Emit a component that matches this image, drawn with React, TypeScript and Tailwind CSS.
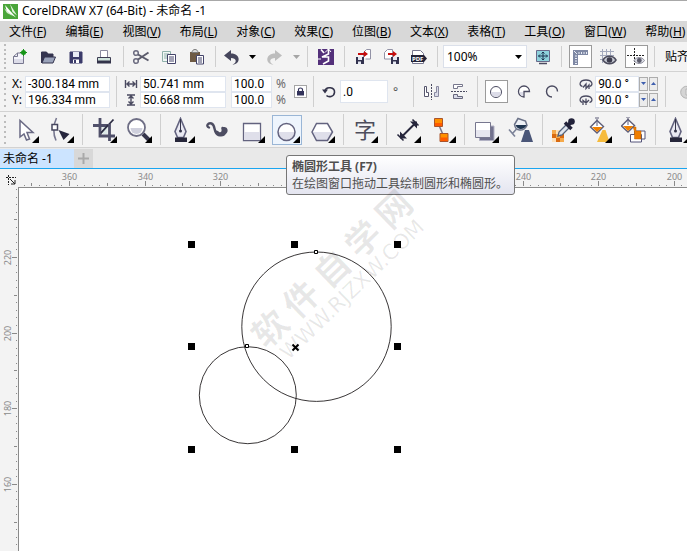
import { ReactNode } from 'react';
import clsx from 'clsx';

const menus = [
    ['文件', 'F'],
    ['编辑', 'E'],
    ['视图', 'V'],
    ['布局', 'L'],
    ['对象', 'C'],
    ['效果', 'C'],
    ['位图', 'B'],
    ['文本', 'X'],
    ['表格', 'T'],
    ['工具', 'O'],
    ['窗口', 'W'],
    ['帮助', 'H'],
];

const INK = '#4a4a60';

function Grip() {
    return (
        <div className="flex h-full w-2 shrink-0 flex-col justify-evenly pl-1">
            {[0, 1, 2, 3, 4, 5].map((i) => (
                <span key={i} className="size-[2px] bg-[#bcbcbc]" />
            ))}
        </div>
    );
}

function Divider({ className }: { className?: string }) {
    return (
        <div className={clsx('my-1 w-px shrink-0 self-stretch bg-[#cfcfcf]', className)} />
    );
}

type IconButtonProps = {
    label: string;
    className?: string;
    boxed?: boolean;
    children: ReactNode;
};

function IconButton({ label, className, boxed, children }: IconButtonProps) {
    return (
        <button
            aria-label={label}
            className={clsx('flex h-7 shrink-0 items-center justify-center', className ?? 'w-7')}
        >
            {boxed ? (
                <span className="flex size-[23px] items-center justify-center border border-[#9b9b9b] bg-white">
                    {children}
                </span>
            ) : (
                children
            )}
        </button>
    );
}

function Icon({ children }: { children: ReactNode }) {
    return (
        <svg viewBox="0 0 18 18" className="size-[18px] shrink-0" fill="none" stroke={INK}>
            {children}
        </svg>
    );
}

type ToolProps = {
    label: string;
    active?: boolean;
    flyout?: boolean;
    children: ReactNode;
};

function Tool({ label, active, flyout = true, children }: ToolProps) {
    return (
        <button
            aria-label={label}
            className="flex h-[34px] w-[35px] shrink-0 items-center justify-center"
        >
            <span
                className={clsx(
                    'flex h-[30px] w-[30px] items-center justify-center border',
                    active ? 'border-[#9ab6d6] bg-[#eef5fd]' : 'border-transparent',
                )}
            >
                <svg viewBox="0 0 26 26" className="size-[26px]" fill="none" stroke={INK}>
                    {children}
                    {flyout && <path d="M26 19v7h-7z" fill="#000" stroke="none" />}
                </svg>
            </span>
        </button>
    );
}

function Caret({ dim }: { dim?: boolean }) {
    return (
        <svg viewBox="0 0 7 4" className="h-1 w-[7px]">
            <path d="M0 0h7L3.5 4z" fill={dim ? '#a5a5a5' : '#000'} />
        </svg>
    );
}

function PenIcon() {
    return (
        <>
            <path d="M11.5 1.5 6 14.5l2.5 6h6l2.500-6z" fill="#e9e9f2" stroke="#63637f" strokeWidth="1.6" />
            <path d="M11.500 2v11" stroke="#35354a" />
            <circle cx="11.500" cy="14" r="1.5" fill="#35354a" stroke="none" />
            <path d="M6 20.500h12V25H6z" fill="#26263a" stroke="none" />
        </>
    );
}

function Bucket() {
    return (
        <>
            <path d="M4.500 10 11 3.500l6.500 6L11 16z" fill="#fff" stroke="#5d5d78" strokeWidth="1.4" />
            <path d="M6 10h10.500L11 15z" fill="#f08000" stroke="none" />
            <path d="M11 9V2M9 1h4" stroke="#5d5d78" />
        </>
    );
}

function TitleBar() {
    return (
        <header className="flex h-[21px] shrink-0 items-center gap-1 border-t border-[#a8a8a8] bg-white pl-[3px]">
            <svg viewBox="0 0 15 15" className="size-[15px] shrink-0">
                <path d="M0 0h15v15H0z" fill="#4aa53a" />
                <path d="M2 1 13 13.500 4 8z" fill="#fff" />
                <path d="M7 0 14 11.500 9.500 8z" fill="#e9f7e4" />
                <path d="m1 4 3 5 6 3z" fill="#d5efcd" />
            </svg>
            <h1 className="whitespace-nowrap text-[12px]">CorelDRAW X7 (64-Bit) - 未命名 -1</h1>
        </header>
    );
}

function MenuBar() {
    return (
        <nav className="flex h-[21px] shrink-0 items-center gap-[19px] overflow-hidden bg-[#d8d8d8] pl-[9px]">
            {menus.map(([name, key]) => (
                <button key={name} className="shrink-0 whitespace-nowrap text-[12px]">
                    {name}(<u>{key}</u>)
                </button>
            ))}
        </nav>
    );
}

function StandardBar() {
    return (
        <div className="flex h-[30px] shrink-0 items-center overflow-hidden border-b border-[#d2d2d2]">
            <Grip />
            <IconButton label="新建" className="-ml-[2px] w-7">
                <Icon>
                    <path d="M2.500 8.500 6.500 5h6v10.500h-10z" fill="#f4f4fa" stroke="#77778f" />
                    <path d="M3 11h9v4H3z" fill="#dcdce8" stroke="none" />
                    <path d="M2.500 8.500h4V5" stroke="#77778f" />
                    <circle cx="12.500" cy="4.500" r="2.500" fill="#159416" stroke="none" />
                    <path d="M12.500 1v7M9 4.500h7" stroke="#159416" />
                </Icon>
            </IconButton>
            <IconButton label="打开">
                <Icon>
                    <path d="M2.500 15V4h5l1.500 2h5v3" fill="#34344f" stroke="#34344f" />
                    <path d="m3 15 2.500-6h11L14 15z" fill="#9aa3ba" stroke="#34344f" />
                </Icon>
            </IconButton>
            <IconButton label="保存">
                <Icon>
                    <path d="M3 4h12v11H3z" fill="#3b3b6a" stroke="#3b3b6a" />
                    <path d="M6 4h6v5H6z" fill="#e9ecf6" stroke="none" />
                    <path d="M6 11.500h6V15H6z" fill="#fff" stroke="none" />
                    <path d="M7 12h2v3H7z" fill="#3b3b6a" stroke="none" />
                </Icon>
            </IconButton>
            <IconButton label="打印">
                <Icon>
                    <path d="M5.500 9V2.500h7V9" fill="#fff" stroke="#8c8ca0" />
                    <path d="M2.500 9.500h13V13h-13z" fill="#cfe3dc" stroke="#3d3d52" />
                    <path d="M2 13h14v2.500H2z" fill="#33334a" stroke="none" />
                </Icon>
            </IconButton>
            <Divider className="mr-[3px] ml-[5px]" />
            <IconButton label="剪切">
                <Icon>
                    <circle cx="4" cy="5" r="2.300" stroke="#6c6c80" strokeWidth="1.5" />
                    <circle cx="4" cy="13" r="2.300" stroke="#6c6c80" strokeWidth="1.500" />
                    <path d="m6 6.500 10.500 6M6 11.500 16.500 4.500" stroke="#5b5b6b" strokeWidth="2" />
                </Icon>
            </IconButton>
            <IconButton label="复制">
                <Icon>
                    <path d="M2.500 3.500h8v10h-8z" fill="#f0f6f4" stroke="#8fb0aa" />
                    <path d="M4 6h5M4 8h3M4 10h3" stroke="#8fb0aa" />
                    <path d="M7.500 6.500h8v9h-8z" fill="#fff" stroke="#44446a" />
                    <path d="M9 9h5M9 11h5M9 13h5" stroke="#44446a" />
                </Icon>
            </IconButton>
            <IconButton label="粘贴">
                <Icon>
                    <path d="M2 4h10v10H2z" fill="#6e5a44" stroke="none" />
                    <path d="M4 4.500c0-4 6-4 6 0z" fill="#ddd" stroke="#7d7d7d" />
                    <path d="M8.500 7.500h7v8.500h-7z" fill="#fff" stroke="#44446a" />
                    <path d="M10 10h4M10 12h4M10 14h4" stroke="#44446a" />
                </Icon>
            </IconButton>
            <Divider className="mx-1" />
            <IconButton label="撤消" className="w-6">
                <Icon>
                    <path d="M1 7.500 8 2v3.500c10 0 10 11 1.500 11 5-2 4-6.500-1.500-6.500V13z" fill="#46465c" stroke="none" />
                </Icon>
            </IconButton>
            <IconButton label="撤消列表" className="w-4">
                <Caret />
            </IconButton>
            <IconButton label="重做">
                <Icon>
                    <path d="M17 7.500 10 2v3.500c-10 0-10 11-1.500 11-5-2-4-6.500 1.500-6.500V13z" fill="#bdbdbd" stroke="none" />
                </Icon>
            </IconButton>
            <IconButton label="重做列表" className="w-4">
                <Caret dim />
            </IconButton>
            <Divider className="mr-1 ml-[3px]" />
            <IconButton label="搜索内容">
                <Icon>
                    <path d="M1 1h16v16H1z" fill="#53307a" stroke="none" />
                    <path d="M4 1.500 7 5M11.500 1v5L5 9h6.500v4L6 16" stroke="#fff" strokeWidth="1.600" />
                    <path d="M8 4.500 11.500 1 14 4M1 11h3" stroke="#fff" />
                </Icon>
            </IconButton>
            <Divider className="mx-1" />
            <IconButton label="导入">
                <Icon>
                    <path d="M9.500 9V4.500l3-3h4V11h-5" fill="#fff" stroke="#9292a6" />
                    <path d="M4 5h6V3l4 3-4 3V7H4z" fill="#c40d0d" stroke="none" />
                    <path d="M2 9h8v7H2z" fill="#32324f" stroke="none" />
                    <path d="M4 9h4v3H4zM4 13.500h3V16H4z" fill="#e6e9f3" stroke="none" />
                </Icon>
            </IconButton>
            <IconButton label="导出">
                <Icon>
                    <path d="M2.500 11V4.500l3-3h5V11z" fill="#fff" stroke="#9292a6" />
                    <path d="M6 5h5V3l4 3-4 3V7H6z" fill="#c40d0d" stroke="none" />
                    <path d="M9 9h8v7H9z" fill="#32324f" stroke="none" />
                    <path d="M11 9h4v3h-4zM11 13.500h3V16h-3z" fill="#e6e9f3" stroke="none" />
                </Icon>
            </IconButton>
            <IconButton label="发布为 PDF">
                <Icon>
                    <path d="M2.500 2.500h8l3 3v10h-11z" fill="#fff" stroke="#77778f" />
                    <path d="M1 7h13l3 3.500-3 3.500H1z" fill="#232338" stroke="none" />
                    <text x="2" y="13" fontSize="6" fontWeight="700" fill="#fff" stroke="none">
                        PDF
                    </text>
                </Icon>
            </IconButton>
            <Divider className="mr-[5px] ml-1" />
            <div className="relative flex h-[23px] w-[84px] shrink-0 items-center border border-[#dbe0ea] bg-white">
                <select
                    aria-label="缩放级别"
                    className="h-full w-full appearance-none pl-[3px] text-[12px] outline-none"
                >
                    <option>100%</option>
                </select>
                <span className="pointer-events-none absolute right-1 flex">
                    <Caret />
                </span>
            </div>
            <IconButton label="全屏预览" className="ml-[2px] w-7">
                <Icon>
                    <path d="M2.500 2.500h13v11h-13z" fill="#8ed2dc" stroke="#69698a" />
                    <path d="M9 4v8M4.500 8h9M7.500 5.500 9 4l1.500 1.500M7.500 10.500 9 12l1.500-1.500M6 6.500 4.500 8 6 9.500M12 6.500 13.500 8 12 9.500" stroke="#1d3350" />
                    <path d="M5 15.500h8" strokeWidth="1.500" />
                </Icon>
            </IconButton>
            <Divider className="mx-1" />
            <IconButton label="显示标尺" boxed>
                <Icon>
                    <path d="M2 2h15v5H7v10H2z" fill="#7e88a4" stroke="none" />
                    <path d="M8 4v2M10.500 4v2M13 4v2M15.500 4v2M4 8h2M4 10.500h2M4 13h2M4 15.500h2M3 3l3 3" stroke="#e9edf7" />
                </Icon>
            </IconButton>
            <IconButton label="显示网格">
                <Icon>
                    <path d="M1 3.500h14M1 7.500h14M1 11.500h5M3.500 1v14M7.500 1v9M11.500 1v7" stroke="#a3a9bd" />
                    <path d="M4 12c3-5 10-5 13 0-3 5-10 5-13 0z" fill="#c9ccd6" stroke="#4c4c5d" strokeWidth="1.500" />
                    <circle cx="10.500" cy="12" r="2.800" fill="#3b3b4c" stroke="none" />
                </Icon>
            </IconButton>
            <IconButton label="显示辅助线" boxed>
                <Icon>
                    <path d="M0 7.500h18M7.500 0v17" stroke="#222" strokeDasharray="2 1" />
                    <path d="M7 12.500c2.500-4 8-4 10.500 0-2.500 4-8 4-10.500 0z" fill="#dcdee6" stroke="#8b8b99" />
                    <circle cx="12.300" cy="12.500" r="2.400" fill="#5c5c6c" stroke="none" />
                </Icon>
            </IconButton>
            <Divider className="mr-[10px] ml-1" />
            <button className="shrink-0 whitespace-nowrap text-[12px]">贴齐</button>
        </div>
    );
}

type FieldProps = {
    label: string;
    value: string;
    className: string;
    children?: ReactNode;
};

function Field({ label, value, className, children }: FieldProps) {
    return (
        <label className="flex h-4 items-center">
            {children}
            <input
                aria-label={label}
                defaultValue={value}
                className={clsx(
                    'h-4 border border-[#dfe5ef] bg-white pl-[2px] font-[Roboto] text-[12px] leading-none outline-none',
                    className,
                )}
            />
        </label>
    );
}

function Angle({ label, flip }: { label: string; flip?: boolean }) {
    return (
        <div className="flex items-center">
            <Field label={label} value="90.0 °" className="w-11">
                <svg viewBox="0 0 14 12" className="mr-[2px] h-3 w-[14px]" fill="none" stroke={INK}>
                    <path d="M3.500 8.500C-1 7 1 2 7 2s8 5 3.500 6.500" strokeWidth="1.300" />
                    {flip ? (
                        <path d="M7 4.500V11M4 11V6.500l3 2.500 3-3" strokeWidth="1.300" />
                    ) : (
                        <path d="M4 9.500 7 6v4.500L10 7v4" strokeWidth="1.300" />
                    )}
                </svg>
            </Field>
            {['减少', '增加'].map((name, i) => (
                <button
                    key={name}
                    aria-label={label + name}
                    className="mr-px flex h-[14px] w-[9px] items-center justify-center border border-[#adadad] bg-[#ececec]"
                >
                    <svg viewBox="0 0 5 3" className="h-[3px] w-[5px]">
                        <path d={i ? 'M0 3h5L2.500 0z' : 'M0 0h5L2.500 3z'} fill="#3f5fae" />
                    </svg>
                </button>
            ))}
        </div>
    );
}

function PropertyBar() {
    return (
        <div className="flex h-10 shrink-0 items-center overflow-hidden border-b border-[#d2d2d2]">
            <Grip />
            <div className="shrink-0 pl-1">
                <Field label="X" value="-300.184 mm" className="w-[85px]">
                    <span className="w-[13px] text-[12px]">X:</span>
                </Field>
                <Field label="Y" value="196.334 mm" className="w-[85px]">
                    <span className="w-[13px] text-[12px]">Y:</span>
                </Field>
            </div>
            <Divider className="mr-[7px] ml-[6px]" />
            <div className="shrink-0">
                <Field label="宽度" value="50.741 mm" className="w-[86px]">
                    <svg viewBox="0 0 14 12" className="mr-[2px] h-3 w-[14px]" fill="none" stroke={INK}>
                        <path d="M1.500 2v8M12.500 2v8M3 6h8M5.500 3.500 3 6l2.500 2.500M8.500 3.500 11 6 8.500 8.500" strokeWidth="1.400" />
                    </svg>
                </Field>
                <Field label="高度" value="50.668 mm" className="w-[86px]">
                    <svg viewBox="0 0 14 12" className="mr-[2px] h-3 w-[14px]" fill="none" stroke={INK}>
                        <path d="M3 1h8M3 11h8M7 2v8M4.500 4.500 7 2l2.500 2.500M4.500 7.500 7 10l2.500-2.500" strokeWidth="1.400" />
                    </svg>
                </Field>
            </div>
            <div className="ml-[5px] shrink-0">
                <Field label="水平缩放" value="100.0" className="w-[41px]" />
                <Field label="垂直缩放" value="100.0" className="w-[41px]" />
            </div>
            <div className="ml-1 shrink-0 text-[12px] leading-4 text-[#6b6b6b]">
                <p>%</p>
                <p>%</p>
            </div>
            <button
                aria-label="锁定比率"
                className="ml-2 flex size-[13px] shrink-0 items-center justify-center border border-[#a5a5a5] bg-white"
            >
                <svg viewBox="0 0 9 9" className="size-[9px]">
                    <path d="M2.500 4V2.500c0-2 4-2 4 0V4" fill="none" stroke="#32325a" strokeWidth="1.200" />
                    <path d="M1 4h7v4.500H1z" fill="#32325a" />
                </svg>
            </button>
            <Divider className="mr-[6px] ml-[6px]" />
            <svg viewBox="0 0 18 18" className="size-[18px] shrink-0" fill="none" stroke="#33334a">
                <path d="M5 8c1-5 10-4 9.500 1.500C14 14 8.500 14.500 6.500 12.500" strokeWidth="1.600" />
                <path d="M2 6.500h6L5 10.500z" fill="#33334a" stroke="none" />
            </svg>
            <input
                aria-label="旋转角度"
                defaultValue=".0"
                className="ml-[2px] h-[23px] w-12 shrink-0 border border-[#dfe5ef] bg-white pl-[2px] font-[Roboto] text-[12px] outline-none"
            />
            <span className="ml-[5px] shrink-0 text-[12px] text-[#555]">°</span>
            <Divider className="mr-[3px] ml-[15px]" />
            <IconButton label="水平镜像">
                <Icon>
                    <path d="M9.500 1v16" strokeDasharray="2 1" />
                    <path d="M2.500 3.500h2v6h2v4h-4z" fill="#fff" stroke="#55556c" />
                    <path d="M16.500 3.500h-2v6h-2v4h4z" fill="#d9dbe8" stroke="#8888a0" />
                </Icon>
            </IconButton>
            <IconButton label="垂直镜像">
                <Icon>
                    <path d="M1 8.500h16" strokeDasharray="2 1" />
                    <path d="M3.500 1.500h9v2h-5v2h-4z" fill="#fff" stroke="#77778c" />
                    <path d="M3.500 15.500h9v-2h-5v-2h-4z" fill="#d9dbe8" stroke="#66667c" />
                </Icon>
            </IconButton>
            <Divider className="mr-1 ml-1" />
            <IconButton label="椭圆形" boxed>
                <Icon>
                    <circle cx="9" cy="9" r="5.500" fill="#fff" />
                    <path d="M4 9h10a5 5 0 0 1-10 0z" fill="#dcdce8" stroke="none" />
                </Icon>
            </IconButton>
            <IconButton label="饼图">
                <Icon>
                    <path d="M14.500 8.500a5.500 5.500 0 1 0-5.500 5.500V8.500z" fill="#fff" strokeWidth="1.300" />
                    <path d="M4.500 9H8v4.300A5 5 0 0 1 4.500 9z" fill="#dcdce8" stroke="none" />
                </Icon>
            </IconButton>
            <IconButton label="弧">
                <Icon>
                    <path d="M14.500 8.500a5.500 5.500 0 1 0-5.500 5.500" strokeWidth="1.400" />
                </Icon>
            </IconButton>
            <Divider className="mr-2 ml-1" />
            <div className="shrink-0">
                <Angle label="起始角度" />
                <Angle label="结束角度" flip />
            </div>
            <Divider className="mr-[6px] ml-[6px]" />
            <IconButton label="更改方向">
                <Icon>
                    <path d="M15 6.500A6 6 0 1 0 15 12H9V6z" fill="#d5d5d5" stroke="#b5b5b5" />
                </Icon>
            </IconButton>
        </div>
    );
}

function Toolbox() {
    return (
        <div className="flex h-9 shrink-0 items-center overflow-hidden border-b border-[#d2d2d2]">
            <Grip />
            <Tool label="选择工具">
                <path d="M7 3.500V20l4-3 2.500 6 3-1-2.500-6.500h6z" fill="#fff" stroke="#6a6a84" strokeWidth="1.500" />
            </Tool>
            <Tool label="形状工具">
                <path d="M8.500 1C5 8 5 17 8 23.500" stroke="#77778f" strokeWidth="1.600" />
                <path d="M4 7.500h5.500V13H4z" fill="#fff" stroke="#46465e" strokeWidth="1.500" />
                <path d="m10.500 13 11 4-6 6z" fill="#25253c" stroke="none" />
            </Tool>
            <Divider className="my-[2px] mr-[3px] ml-1" />
            <Tool label="裁剪工具">
                <path d="m22.500 2.500-13 14" stroke="#2c2c42" strokeWidth="1.800" />
                <path d="M9 1v18h15M2 8.500h16.500V24" stroke="#50506a" strokeWidth="2.800" />
                <path d="M11.500 10h5v7h-5z" fill="#b9d8d5" fillOpacity="0.4" stroke="none" />
                <path d="m17 8-7 8" stroke="#2c2c42" strokeWidth="1.500" />
            </Tool>
            <Tool label="缩放工具">
                <path d="m17 17 7 7" stroke="#35354c" strokeWidth="4" />
                <circle cx="10.500" cy="10.500" r="8.500" fill="#fff" stroke="#6e6e85" strokeWidth="1.800" />
                <path d="M4.500 11h12a6 6 0 0 1-12 0z" fill="#cfd0dd" stroke="none" />
            </Tool>
            <Divider className="my-[2px] mr-[3px] ml-1" />
            <Tool label="钢笔工具">
                <PenIcon />
            </Tool>
            <Tool label="艺术笔工具" flyout={false}>
                <path d="M5 10.500C1.500 9 4 5.500 7.500 6.500 12 8 9 16 14.500 18c7 2 9.500-6 4-7" stroke="#4d4d62" strokeWidth="2.400" strokeLinecap="round" />
                <path d="M11 13c1 8 14 6 12.500-.500-1-3.500-7-3-6 .500.500 2-1.500 3.500-3.500 1z" fill="#4d4d62" stroke="none" />
            </Tool>
            <Tool label="矩形工具">
                <path d="M4.500 6.500h17v17h-17z" fill="#fff" stroke="#63637f" strokeWidth="1.300" />
                <path d="M5 15h16v8H5z" fill="#dfdfea" stroke="none" />
            </Tool>
            <Tool label="椭圆形工具 (F7)" active>
                <circle cx="12.500" cy="15" r="8.500" fill="#fff" stroke="none" />
                <path d="M4 15h17a8.500 8.500 0 0 1-17 0z" fill="#dfdfea" stroke="none" />
                <circle cx="12.500" cy="15" r="8.500" stroke="#63637f" strokeWidth="1.500" />
            </Tool>
            <Tool label="多边形工具">
                <path d="M3 15 7.500 6.500h11L23.500 15l-5 8.500h-11z" fill="#fff" stroke="none" />
                <path d="M3 15h20.500l-5 8.500h-11z" fill="#dfdfea" stroke="none" />
                <path d="M3 15 7.500 6.500h11L23.500 15l-5 8.500h-11z" stroke="#63637f" strokeWidth="1.500" />
            </Tool>
            <Divider className="my-[2px] mr-[3px] ml-1" />
            <Tool label="文本工具">
                <text x="2" y="21" fontSize="22" fill="#4d4d5c" stroke="none">
                    字
                </text>
            </Tool>
            <Divider className="my-[2px] mr-[3px] ml-1" />
            <Tool label="平行度量工具">
                <path d="m6 20.500 15-15" stroke="#26263c" strokeWidth="2" />
                <path d="M5 21.500v-7l7 7zM22 4.500v7l-7-7z" fill="#26263c" stroke="none" />
                <path d="m2.500 17.500 6 6M17.500 2.500l6 6" stroke="#26263c" strokeWidth="1.500" />
            </Tool>
            <Tool label="直线连接器工具">
                <path d="m8 6 6 14" stroke="#77778f" strokeWidth="1.500" />
                <path d="M4.500 1.500h8v8h-8zM10 16.500h8v8h-8z" fill="#ff9000" stroke="#a9542c" />
                <path d="M5 6h7v3H5zM10.500 20.500h7V24h-7z" fill="#ff5a00" stroke="none" />
            </Tool>
            <Divider className="my-[2px] mr-[3px] ml-1" />
            <Tool label="阴影工具">
                <path d="M6.500 9H21v14.500H6.500z" fill="#72728e" stroke="#b2b2c4" />
                <path d="M2.500 5.500h15v15h-15z" fill="#fff" stroke="#77778f" />
                <path d="M3 13h14v7H3z" fill="#e6e6ef" stroke="none" />
            </Tool>
            <Tool label="透明度工具" flyout={false}>
                <path d="m10 1.500-3.500 6c1 7 9 7.500 12.500 1L17.500 4z" fill="#eef1f6" stroke="#6b7288" strokeWidth="1.500" />
                <path d="M7.500 8h11c-2 5-9 5.500-11 0z" fill="#1f3550" stroke="none" />
                <path d="m9 11.500-4.500 5M1 12.500l6 7" stroke="#7b8298" strokeWidth="1.600" />
                <path d="M17 13h4l4 12H13z" fill="#4a5678" stroke="none" />
            </Tool>
            <Divider className="my-[2px] mr-[3px] ml-1" />
            <Tool label="颜色滴管工具">
                <path d="M1 13h12v12H1z" fill="#f5a94a" stroke="none" />
                <path d="M1 17h4v4H1zM5 21h4v4H5zM9 17h4v4H9z" fill="#d96a10" stroke="none" />
                <path d="M5 13h4v4H5zM1 21h4v4H1z" fill="#fde0b8" stroke="none" />
                <path d="m7 19 1-4 8-8 3 3-8 8z" fill="#dfe5ee" stroke="#54637c" strokeWidth="1.300" />
                <path d="m14 5.500 6.500 6.500M16.500 9l4.500-5" stroke="#22223a" strokeWidth="3.500" />
                <circle cx="20.500" cy="4.500" r="3.300" fill="#22223a" stroke="none" />
            </Tool>
            <Tool label="交互式填充工具">
                <path d="M16.500 13h3l4 12H11z" fill="#f6bb3c" stroke="none" />
                <Bucket />
            </Tool>
            <Tool label="智能填充工具" flyout={false}>
                <path d="M13.500 14h10.500v8H13.500z" fill="#fff" stroke="#55557a" />
                <path d="M9.500 17.500h11v7.500h-11z" fill="#fff" stroke="#55557a" />
                <path d="M12 10h3v4h5v8h-6.500v-8z" fill="#ef7d00" stroke="#c26200" strokeWidth="0.500" />
                <g transform="translate(-4 -1)">
                    <Bucket />
                </g>
            </Tool>
            <Divider className="my-[2px] mr-[3px] ml-1" />
            <Tool label="轮廓笔">
                <PenIcon />
            </Tool>
        </div>
    );
}

// 20 ruler units take 378/5 px, one tick every 2 units
const STEP = 7.56;

function tickSize(i: number) {
    if (i % 10 === 0) return 5;
    return i % 5 === 0 ? 3 : 1;
}

function HorizontalRuler() {
    const ticks = Array.from({ length: 90 }, (_, i) => i - 6);
    return (
        <svg className="h-[18px] min-w-0 flex-1" stroke="#8a8a8a">
            {ticks.map((i) => {
                const x = Math.round(50 + i * STEP) + 0.5;
                return (
                    <g key={i}>
                        <path d={`M${x} ${17 - tickSize(i)}V17`} />
                        {i % 10 === 0 && (
                            <text x={x} y="11" textAnchor="middle" fontSize="9" fill="#8a8a8a" stroke="none">
                                {Math.abs(360 - i * 2)}
                            </text>
                        )}
                    </g>
                );
            })}
        </svg>
    );
}

function VerticalRuler() {
    const ticks = Array.from({ length: 49 }, (_, i) => i - 9);
    return (
        <svg className="h-full w-[18px] shrink-0" stroke="#8a8a8a">
            {ticks.map((i) => {
                const y = Math.round(70 + i * STEP) + 0.5;
                return (
                    <g key={i}>
                        <path d={`M${17 - tickSize(i)} ${y}H17`} />
                        {i % 10 === 0 && (
                            <text
                                transform={`translate(11 ${y}) rotate(-90)`}
                                textAnchor="middle"
                                fontSize="9"
                                fill="#8a8a8a"
                                stroke="none"
                            >
                                {Math.abs(220 - i * 2)}
                            </text>
                        )}
                    </g>
                );
            })}
        </svg>
    );
}

function Drawing() {
    const xs = [169, 272, 375];
    const ys = [53, 155, 258];
    return (
        <svg className="absolute inset-0 h-full w-full" fill="none" stroke="#231f20">
            <circle cx="297.500" cy="138.700" r="74.700" strokeWidth="0.900" />
            <circle cx="228.800" cy="207.200" r="48.500" strokeWidth="0.900" />
            {xs.map((x) =>
                ys.map((y) =>
                    x === 272 && y === 155 ? null : (
                        <rect key={`${x}-${y}`} x={x} y={y} width="7" height="7" fill="#000" stroke="none" />
                    ),
                ),
            )}
            <path d="m273.500 156.500 6 6M279.500 156.500l-6 6" stroke="#000" strokeWidth="2" />
            <path d="M295.500 62.500h3v3h-3zM226.500 156.500h3v3h-3z" fill="#fff" stroke="#000" />
        </svg>
    );
}

export default function App() {
    return (
        <div className="relative flex h-screen min-h-[400px] flex-col overflow-hidden bg-[#f3f3f3] font-['Noto_Sans','Noto_Sans_CJK_SC',sans-serif] leading-4 text-black">
            <TitleBar />
            <MenuBar />
            <StandardBar />
            <PropertyBar />
            <Toolbox />

            <div className="flex h-[21px] shrink-0 border-b border-[#1aa5f0] bg-[#e9e9e9] pt-px">
                <button className="w-[74px] bg-[#cce4ff] pl-[3px] text-left text-[12px] whitespace-nowrap">
                    未命名 -1
                </button>
                <button aria-label="新建文档" className="flex w-[19px] items-center justify-center bg-[#d8d8d8]">
                    <svg viewBox="0 0 11 11" className="size-[11px]">
                        <path d="M5.500 0v11M0 5.500h11" stroke="#a9a9a9" strokeWidth="2" />
                    </svg>
                </button>
            </div>

            <div className="flex shrink-0">
                <svg viewBox="0 0 19 18" className="h-[18px] w-[19px] shrink-0" fill="none" stroke="#222">
                    <path d="M6 8.500h10M8.500 6v10" strokeDasharray="2 1" />
                    <path d="m10 10 5 5M15 11v4h-4" />
                </svg>
                <HorizontalRuler />
            </div>
            <div className="flex min-h-0 flex-1">
                <VerticalRuler />
                <main className="relative min-w-0 flex-1 border-t border-l border-[#8a8a8a] bg-white">
                    <Drawing />
                </main>
            </div>

            <div
                role="tooltip"
                className="absolute top-[155px] left-[286px] h-10 w-[229px] rounded-[3px] border border-[#767676] bg-linear-to-b from-white to-[#e4e5f0] px-[5px] pt-[2px] text-[12px] leading-[17px] whitespace-nowrap text-[#4f4f4f]"
            >
                <p className="font-bold">椭圆形工具 (F7)</p>
                <p>在绘图窗口拖动工具绘制圆形和椭圆形。</p>
            </div>

            <div className="pointer-events-none absolute top-[249px] left-[219px] flex h-[54px] w-[240px] -rotate-44 flex-col items-center gap-1 text-black/9">
                <p className="flex gap-2 text-[35px] leading-[34px] font-bold">
                    {['软', '件', '自', '学', '网'].map((c) => (
                        <span key={c}>{c}</span>
                    ))}
                </p>
                <p className="font-['DejaVu_Sans'] text-[21px] leading-4">WWW.RJZXW.COM</p>
            </div>
        </div>
    );
}
